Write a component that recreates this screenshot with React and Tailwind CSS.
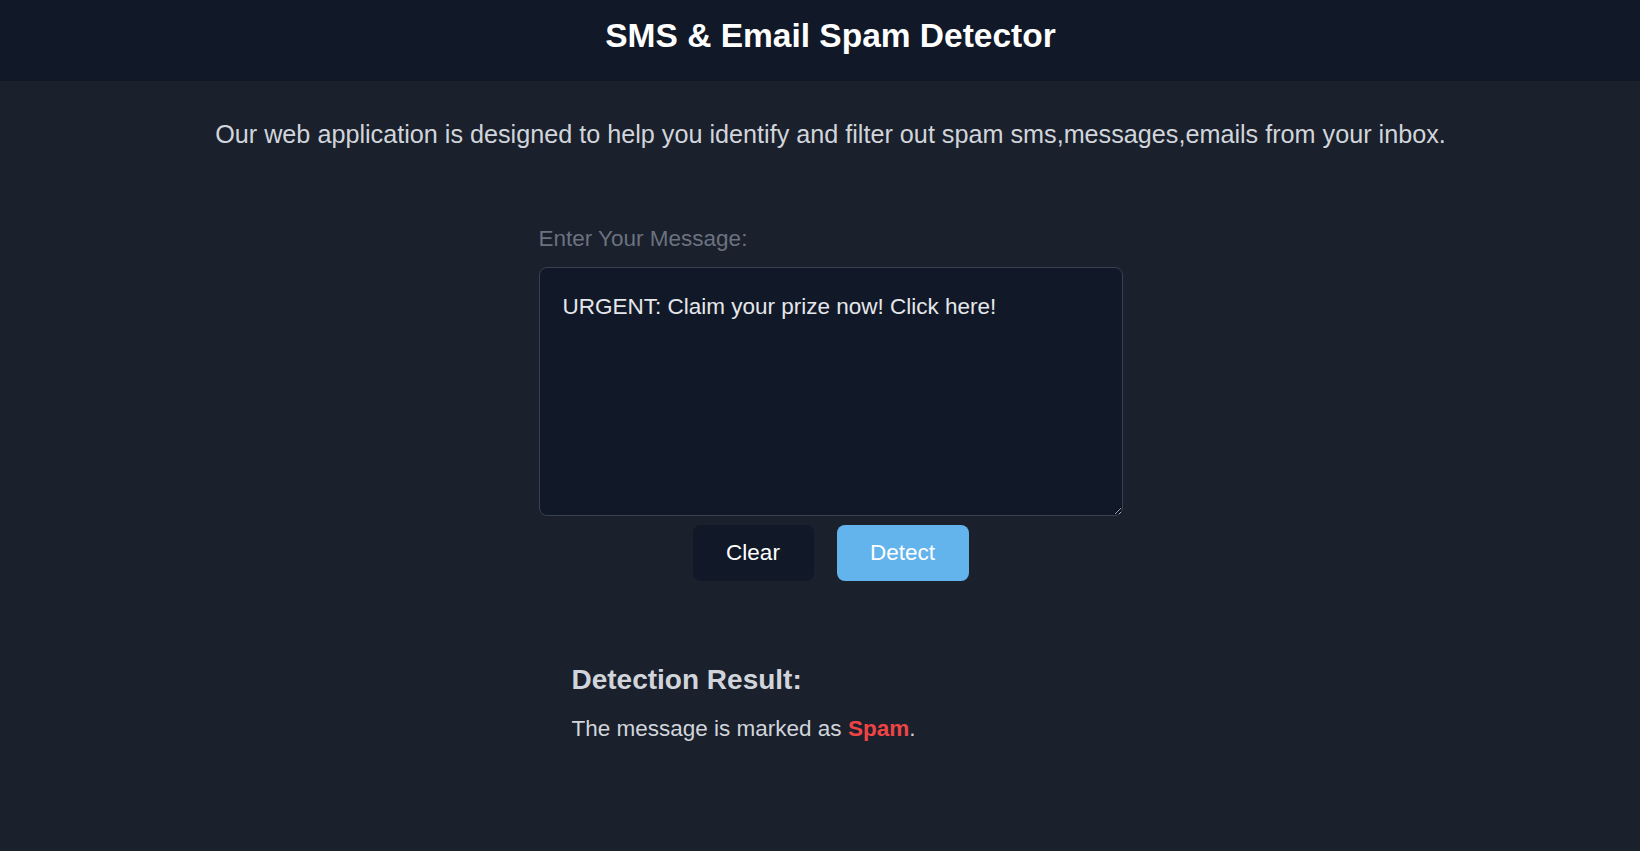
export default function App() {
  return (
    <div
      className="min-h-[851px] bg-[#1a202c] text-[#e2e8f0]"
      style={{ fontFamily: '"Liberation Sans", Arial, sans-serif' }}
    >
      {/* Header */}
      <header className="h-[81px] bg-[#111827] pt-[16px] pl-[21px]">
        <h1 className="text-center text-[33.5px] leading-[39px] font-bold text-white">
          SMS &amp; Email Spam Detector
        </h1>
      </header>

      <main className="pl-[21px]">
        <p className="mt-[38px] text-center text-[25.2px] leading-[31px] text-[#d1d5db]">
          Our web application is designed to help you identify and filter out spam sms,messages,emails from your inbox.
        </p>

        <div className="mx-auto mt-[75px] w-[584px]">
          <label className="block text-[22.5px] leading-[27px] text-[#6b7280]">
            Enter Your Message:
          </label>
          <textarea
            className="mt-[15px] block h-[249px] w-full resize-y rounded-lg border border-[#374151] bg-[#111827] px-[23px] pt-[25px] pb-[23px] text-[22.5px] leading-[27px] text-[#e5e7eb] outline-none"
            defaultValue="URGENT: Claim your prize now! Click here!"
          />

          <div className="mt-[9px] flex justify-center gap-[23px]">
            <button className="h-[56px] w-[121px] rounded-lg bg-[#111827] text-[22.5px] text-white">
              Clear
            </button>
            <button className="h-[56px] w-[132px] rounded-lg bg-[#63b3ed] text-[22.5px] text-white">
              Detect
            </button>
          </div>

          <div className="mt-[82px] pl-[33px]">
            <h2 className="text-[28px] leading-[34px] font-bold text-[#d1d5db]">
              Detection Result:
            </h2>
            <p className="mt-[18px] text-[22.5px] leading-[27px] text-[#d1d5db]">
              The message is marked as <span className="font-bold text-[#ef4444]">Spam</span>.
            </p>
          </div>
        </div>
      </main>
    </div>
  );
}
